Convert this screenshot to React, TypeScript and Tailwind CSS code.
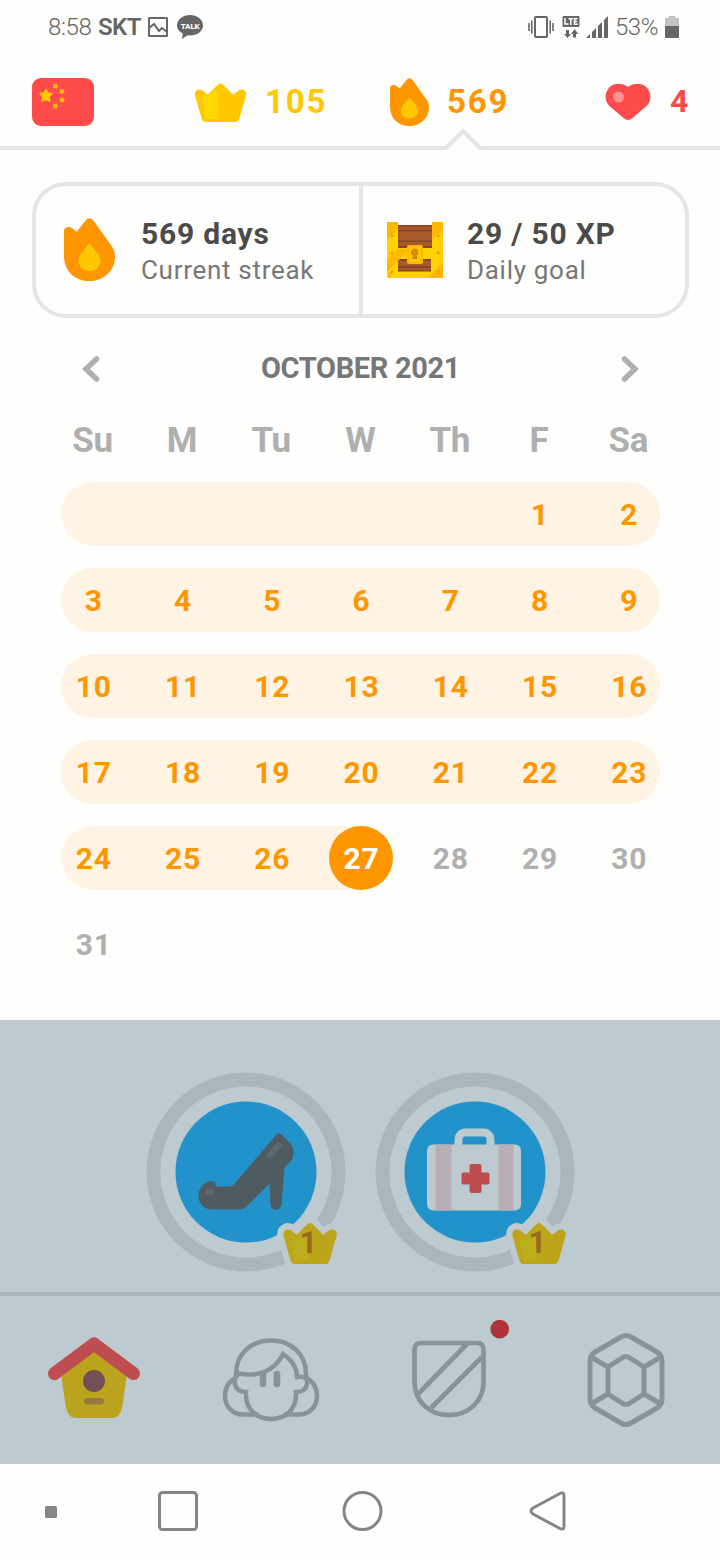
import React from 'react';
import clsx from 'clsx';

const WEEKDAYS = ['Su', 'M', 'Tu', 'W', 'Th', 'F', 'Sa'];
const WEEKS: (number | null)[][] = [
  [null, null, null, null, null, 1, 2],
  [3, 4, 5, 6, 7, 8, 9],
  [10, 11, 12, 13, 14, 15, 16],
  [17, 18, 19, 20, 21, 22, 23],
  [24, 25, 26, 27, 28, 29, 30],
  [31, null, null, null, null, null, null],
];
const TODAY = 27;

const CROWN =
  'M1 13C0 7 5 5 9 8L14 12L24 2Q27 -1 30 2L40 12L45 8C49 5 54 7 53 13L46 37Q45 40 42 40H12Q9 40 8 37Z';

const Flame = ({ className }: { className: string }) => (
  <svg className={className} viewBox="0 0 52 64" preserveAspectRatio="none">
    <path
      d="M0 38V13C0 9 6 8 9 11L13 14L22 2.5Q26 -2 30 2.5L46 25C50 30 52 34 52 39C52 54 40 64 26 64C11 64 0 54 0 38Z"
      fill="#ff9600"
    />
    <path
      d="M26 26Q27 26 28 28L35 37C41 46 34 54 26 54C18 54 11 46 17 37L24 28Q25 26 26 26Z"
      fill="#ffc800"
    />
  </svg>
);

const StatusBar = () => (
  <div className="flex h-[54px] items-center pr-[41px] pl-12 text-2xl text-[#666]">
    <span className="w-11 font-light tracking-[-0.4px]">8:58</span>
    <span className="ml-1.5 w-[43px] font-semibold tracking-[-0.6px]">SKT</span>
    <svg className="ml-[7px] h-5 w-5" viewBox="0 0 20 20" fill="none" stroke="#666" strokeWidth="2">
      <rect x="1" y="1" width="18" height="18" rx="0.5" />
      <path d="M1 11L6 7L11 14L14 11L19 15" />
    </svg>
    <svg className="ml-[9px] h-6 w-[26px]" viewBox="0 0 26 24">
      <path
        d="M13 0C20 0 26 4.500 26 10.500C26 16.500 20 20.500 13 20.500C12 20.500 11 20.500 10.500 20.300L5 24L5.800 18.500C2 16.500 0 14 0 10.500C0 4.500 6 0 13 0Z"
        fill="#666"
      />
      <text x="3.700" y="13.500" fontSize="8" fontWeight="800" fill="#fff" textLength="19">
        TALK
      </text>
    </svg>
    <svg className="ml-auto h-[22px] w-[26px]" viewBox="0 0 26 22" fill="none" stroke="#666">
      <rect x="7" y="1" width="12" height="20" rx="1" strokeWidth="2" />
      <path d="M1 7V15M3.800 4.500V17.500M22.200 4.500V17.500M25 7V15" strokeWidth="1.600" />
    </svg>
    <svg className="ml-2 h-[22px] w-[18px]" viewBox="0 0 18 22" fill="#666">
      <rect x="0.500" width="17" height="11" rx="1" />
      <path d="M3 2V8H6.500M6.500 2.700H11M8.800 2.800V9M15.500 2.700H12.500V8.200H15.800M12.500 5.500H15" fill="none" stroke="#fff" strokeWidth="1.500" />
      <path d="M4 14H7V18H9L5.500 22L2 18H4ZM11 21.500H14V18H16L12.700 13L9 18H11Z" />
    </svg>
    <svg className="ml-1.5 h-[22px] w-[22px]" viewBox="0 0 22 22" fill="#666">
      <path d="M0 22L4 18V22ZM6 22V16L10 12V22ZM12 22V10L16 6V22ZM18 22V4L22 0V22Z" />
    </svg>
    <span className="ml-[7px] w-[41px] font-light tracking-[-0.5px]">53%</span>
    <svg className="ml-[9px] h-[22px] w-3.5" viewBox="0 0 14 22">
      <path d="M0 2H4V0H10V2H14V10H0Z" fill="#c2c2c2" />
      <path d="M0 10H14V21Q14 22 13 22H1Q0 22 0 21Z" fill="#666" />
    </svg>
  </div>
);

const Star = ({ x, y, size, turn = 0 }: { x: number; y: number; size: number; turn?: number }) => (
  <path
    transform={`translate(${x} ${y}) rotate(${turn}) scale(${size})`}
    d="M0 -6L2 -2.500L6 -2L3 1.500L4 5.500L0 4L-4 5.500L-3 1.500L-6 -2L-2 -2.500Z"
    fill="#ffc800"
    stroke="#ffc800"
    strokeWidth="1.500"
    strokeLinejoin="round"
  />
);

const Header = () => (
  <div className="relative flex h-24 items-center border-b-4 border-[#e5e5e5] pt-1 pl-8 text-[33px] leading-none font-bold">
    <svg className="h-12 w-[62px]" viewBox="0 0 62 48">
      <rect width="62" height="48" rx="9" fill="#ff4b4b" />
      <Star x={14} y={17.5} size={1} />
      <Star x={23.5} y={8} size={0.42} turn={20} />
      <Star x={30} y={13.5} size={0.42} turn={40} />
      <Star x={30} y={22} size={0.42} turn={10} />
      <Star x={23.5} y={28} size={0.42} turn={20} />
    </svg>
    <svg className="ml-[101px] h-[39px] w-[51px]" viewBox="1 0 52 40" preserveAspectRatio="none">
      <path d={CROWN} fill="#ffc800" />
      <path d="M8 14Q7 11 10 13Q14 15 16 12L22 8Q24 7 24 10L25 34Q25 37 22 37H15Q12 37 11 34Z" fill="#ffd900" />
    </svg>
    <span className="-mt-0.5 ml-[19px] w-[62px] tracking-[1.8px] text-[#ffc800]">105</span>
    <Flame className="ml-[63px] h-12 w-[39px]" />
    <span className="-mt-0.5 ml-[18px] w-[63px] tracking-[1.8px] text-[#ff9600]">569</span>
    <svg className="ml-[95px] h-9 w-[46px]" viewBox="0 0 45 36">
      <path
        d="M22.500 3C29 -2 38 -1 42 4.500C46 10 46 17 41 22L27 34Q22.500 38 18 34L4 22C-1 17 -1 10 3 4.500C7 -1 16 -2 22.500 3Z"
        fill="#ff4b4b"
      />
      <circle cx="13" cy="13" r="5.500" fill="#ff9494" />
    </svg>
    <span className="-mt-0.5 ml-[19px] text-[32px] text-[#ff4b4b]">4</span>
    <svg className="absolute top-[73px] left-[443px] h-[23px] w-10" viewBox="0 0 40 23">
      <path d="M0 23L20 3L40 23Z" fill="#fefefd" />
      <path d="M0 21H3L20 4L37 21H40" fill="none" stroke="#e5e5e5" strokeWidth="4" />
    </svg>
  </div>
);

const Chest = () => (
  <svg className="h-14 w-14" viewBox="0 0 56 56">
    <path d="M10 3H46V51H10Z" fill="#a95a2b" />
    <path d="M10 3H46V4.500H10ZM10 8H46V9.500H10ZM10 18.500H46V20H10ZM10 24H46V27H10ZM10 37H46V39H10ZM10 44H46V46H10ZM10 48H46V50H10Z" fill="#874623" />
    <path d="M0 2Q0 0 2 0H11V26H45V0H54Q56 0 56 2V54Q56 56 54 56H2Q0 56 0 54ZM11 37V49.500H44V37Z" fill="#ffd200" fillRule="evenodd" />
    <path d="M0 0H11V7L0 17ZM45 0H56V7L45 18ZM0 38L11 27H20V30L0 50ZM56 40V56H40ZM0 54L4 50V54L2 56Z" fill="#ffb800" />
    <rect x="20" y="23" width="16" height="19" rx="2" fill="#ffb800" />
    <rect x="22" y="25" width="12" height="15" rx="1" fill="#ffc800" />
    <path d="M25 28Q28 25 31 28V33H30V37H25V35H26V33H24V29Z" fill="#d98900" />
    <path d="M5 12L7 14L5 16L3 14ZM51 12L53 14L51 16L49 14ZM5 29L7 31L5 33L3 31ZM51 29L53 31L51 33L49 31ZM5 48L7 50L5 52L3 50ZM51 48L53 50L51 52L49 50Z" fill="#ef9f00" />
  </svg>
);

const StatCards = () => (
  <div className="mx-8 mt-8 flex h-[136px] w-[657px] rounded-[34px] border-4 border-[#e5e5e5]">
    <div className="flex w-[327px] items-center border-r-4 border-[#e5e5e5] pl-7">
      <Flame className="-mt-0.5 h-[63px] w-[51px]" />
      <div className="mt-1 ml-[26px]">
        <div className="text-[30px] leading-9 font-bold tracking-[0.8px] text-[#4b4b4b]">569 days</div>
        <div className="text-[26px] leading-9 tracking-[0.7px] text-[#777]">Current streak</div>
      </div>
    </div>
    <div className="flex items-center pl-6">
      <Chest />
      <div className="mt-1 ml-6">
        <div className="text-[30px] leading-9 font-bold tracking-[0.8px] text-[#4b4b4b]">29 / 50 XP</div>
        <div className="text-[26px] leading-9 tracking-[0.7px] text-[#777]">Daily goal</div>
      </div>
    </div>
  </div>
);

const Week = ({ days }: { days: (number | null)[] }) => {
  const hasToday = days.includes(TODAY);
  const isFuture = (days[0] ?? 0) > TODAY;
  return (
    <div
      className={clsx(
        'h-16 rounded-full',
        isFuture ? 'w-[599px]' : hasToday ? 'w-[332px] bg-[#fff4e4]' : 'w-[599px] bg-[#fff4e4]'
      )}
    >
      <div className="-ml-[12px] grid h-16 w-[625px] grid-cols-7 items-center text-center text-[30px] font-bold tracking-[0.8px]">
        {days.map((day, i) => (
          <div
            key={i}
            className={clsx(
              'mx-auto flex size-16 items-center justify-center rounded-full',
              day === TODAY ? 'bg-[#ff9600] text-white' : (day ?? 0) > TODAY ? 'text-[#afafaf]' : 'text-[#ff9600]'
            )}
          >
            {day}
          </div>
        ))}
      </div>
    </div>
  );
};

const Calendar = () => (
  <div className="pt-[31px] pl-[61px]">
    <div className="flex h-10 w-[599px] items-center justify-between px-[21px]">
      <svg className="h-[26px] w-[18px]" viewBox="0 0 18 26" fill="none" stroke="#afafaf" strokeWidth="5.500" strokeLinecap="round">
        <path d="M14.500 3L4 13L14.500 23" />
      </svg>
      <span className="text-[29px] font-bold tracking-[-0.35px] text-[#777]">OCTOBER 2021</span>
      <svg className="h-[26px] w-[18px]" viewBox="0 0 18 26" fill="none" stroke="#afafaf" strokeWidth="5.500" strokeLinecap="round">
        <path d="M3.500 3L14 13L3.500 23" />
      </svg>
    </div>
    <div className="mt-[26px] -ml-[13px] grid h-12 w-[625px] grid-cols-7 items-center text-center text-[35px] font-bold tracking-[-0.3px] text-[#afafaf]">
      {WEEKDAYS.map((d) => (
        <div key={d}>{d}</div>
      ))}
    </div>
    <div className="mt-[19px] flex flex-col gap-[22px]">
      {WEEKS.map((days, i) => (
        <Week key={i} days={days} />
      ))}
    </div>
  </div>
);

const Shoe = () => (
  <g>
    <path
      d="M136 74Q138 71 141 74L149 82C155 88 154 97 149 102L144 107L141 144C140 151 130 151 130 144L129 123L107 145Q103 149 97 149H72C62 149 58 142 58 135C58 126 66 119 74 121Q76 124 75 126H88Q92 126 95 122Z"
      fill="#4e5b61"
    />
    <path d="M129 95L138 85" stroke="#5c696f" strokeWidth="6" strokeLinecap="round" />
    <rect x="65" y="128" width="9" height="6" rx="3" fill="#5c696f" />
  </g>
);

const MedKit = () => (
  <g>
    <rect x="89" y="72" width="32" height="30" rx="7" fill="none" stroke="#bdcacf" strokeWidth="8" />
    <rect x="57.500" y="84" width="94" height="66" rx="6" fill="#bdcacf" />
    <path d="M66 84H82V150H66ZM129 84H144V150H129Z" fill="#b8afb6" />
    <rect x="100" y="103.500" width="12" height="29" rx="2" fill="#be4d50" />
    <rect x="92" y="112" width="28" height="12" rx="2" fill="#be4d50" />
  </g>
);

const Skill = ({ children }: { children: React.ReactNode }) => (
  <div className="relative size-[200px]">
    <svg className="size-[200px]" viewBox="5 11 200 200">
      <circle cx="105" cy="111" r="92.500" fill="none" stroke="#aab6bc" strokeWidth="14" />
      <circle cx="105" cy="111" r="70.500" fill="#2192ca" />
      <g transform="translate(-0.500 -0.500)">{children}</g>
      <g transform="translate(141.500 161.500) scale(1.020 1.040)">
        <path d={CROWN} fill="#bdcacf" stroke="#bdcacf" strokeWidth="12" strokeLinejoin="round" />
        <path d={CROWN} fill="#bca41b" />
        <path d="M8 16Q7 13 10 15Q14 17 16 13L22 9Q24 8 24 11L25 34Q25 37 22 37H15Q12 37 11 34Z" fill="#bcae1b" />
      </g>
    </svg>
    <span className="absolute top-[153px] left-[154px] text-[31px] leading-9 font-bold text-[#996a1b]">1</span>
  </div>
);

const Tabs = () => (
  <div className="flex h-[172px] items-start border-t-4 border-[#aab6bc]">
    <svg className="mt-10 ml-12 h-[83px] w-[93px]" viewBox="48 1336 93 83">
      <path d="M61 1374L94 1350L127 1374L122 1408Q120 1418 111 1418H77Q68 1418 66 1408Z" fill="#bca41e" />
      <path d="M54.500 1373.500L94 1344L133.500 1373.500" fill="none" stroke="#be4d50" strokeWidth="13" strokeLinecap="round" strokeLinejoin="round" />
      <circle cx="94" cy="1381" r="11" fill="#745056" />
      <rect x="84" y="1398" width="20" height="6.500" rx="3.200" fill="#977939" />
    </svg>
    <svg className="mt-10 ml-[81px] h-[86px] w-[98px]" viewBox="222 1336 98 86" fill="none" stroke="#869399" strokeWidth="4.500">
      <path d="M236 1377V1374C236 1353 252 1340.500 271 1340.500C290 1340.500 306 1353 306 1374V1377" />
      <path d="M237 1378C229 1380 225 1388 225 1396C225 1407 233 1414.500 243 1414.500H258M305 1378C313 1380 317 1388 317 1396C317 1407 309 1414.500 299 1414.500H284" />
      <path d="M237 1373C257 1378 275 1371 283 1354C292 1360 297 1368 297 1377C307 1376 308 1380 307 1384C306 1390 302 1392 296 1392C297 1409 286 1419 271 1419C256 1419 245 1409 246 1392C240 1392 236 1390 235 1384C234 1379 235 1376 239 1375" />
      <path d="M263 1374V1384M277 1374V1384" strokeWidth="6.500" strokeLinecap="round" />
    </svg>
    <svg className="mt-6 ml-[92px] h-[98px] w-[98px]" viewBox="412 1320 98 98" fill="none" stroke="#869399" strokeWidth="4.700">
      <path d="M421 1343H477Q483.500 1343 483.500 1350V1382C483.500 1401 469 1415 449 1415C429 1415 414.500 1401 414.500 1382V1350Q414.500 1343 421 1343Z" />
      <path d="M467 1344L418 1394M482 1357L431 1408" />
      <circle cx="499.700" cy="1329.200" r="9.300" fill="#ad3339" stroke="none" />
    </svg>
    <svg className="mt-9 ml-[76px] h-24 w-20" viewBox="586 1332 80 96" fill="none" stroke="#869399" strokeWidth="5" strokeLinejoin="round">
      <path d="M621 1337Q626 1334 631 1337L657 1352Q662 1355 662 1361V1399Q662 1405 657 1408L631 1423Q626 1426 621 1423L595 1408Q590 1405 590 1399V1361Q590 1355 595 1352Z" />
      <path d="M622 1358Q626 1355 630 1358L644 1367V1394L630 1403Q626 1406 622 1403L608 1394V1367ZM591 1357L608 1367M661 1357L644 1367M591 1404L608 1394M661 1404L644 1394" />
    </svg>
  </div>
);

const NavBar = () => (
  <svg className="block h-24 w-[720px]" viewBox="0 1464 720 96" fill="none" stroke="#858585" strokeWidth="3">
    <rect x="45" y="1506" width="12" height="12" rx="1.500" fill="#858585" stroke="none" />
    <rect x="159.500" y="1492.500" width="37" height="37" rx="3" />
    <circle cx="362.500" cy="1511" r="18.500" />
    <path d="M533 1508L559 1494Q564 1491 564 1496V1526Q564 1531 559 1528L533 1514Q529 1511 533 1508Z" />
  </svg>
);

const App = () => (
  <div className="h-[1560px] w-[720px] overflow-hidden bg-[#fefefd] font-['Roboto',sans-serif]">
    <StatusBar />
    <div className="h-[966px]">
      <Header />
      <StatCards />
      <Calendar />
    </div>
    <div className="h-[444px] bg-[#bdcacf]">
      <div className="flex h-[272px] gap-[29px] pt-[51.500px] pl-[145.500px]">
        <Skill>
          <Shoe />
        </Skill>
        <Skill>
          <MedKit />
        </Skill>
      </div>
      <Tabs />
    </div>
    <NavBar />
  </div>
);

export default App;
